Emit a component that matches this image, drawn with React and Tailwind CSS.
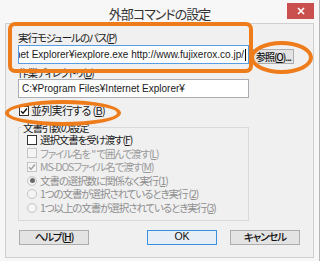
import React from 'react';

const jp = "font-['Noto_Sans_CJK_JP',sans-serif] [font-feature-settings:'palt']";
const latin = "font-['Liberation_Sans','Noto_Sans_CJK_JP',sans-serif] tracking-normal";

const Key = ({ k }) => (
  <>
    (<span className="underline underline-offset-1">{k}</span>)
  </>
);

const CheckBox = ({ checked, disabled, label }) => (
  <div className={`flex items-center h-[13.6px] gap-[3px] ${disabled ? 'text-[#9a9a9a]' : 'text-[#1a1a1a]'}`}>
    <div
      className={`w-[10px] h-[10px] border flex items-center justify-center ${
        disabled ? 'border-[#c4c4c4] bg-[#f4f4f4]' : 'border-[#333] bg-white'
      }`}
    >
      {checked && (
        <svg width="8" height="8" viewBox="0 0 8 8">
          <path d="M1 4.2 L3 6.2 L7 1.5" fill="none" stroke={disabled ? '#a0a0a0' : '#111'} strokeWidth="1.4" />
        </svg>
      )}
    </div>
    <span>{label}</span>
  </div>
);

const Radio = ({ checked, label }) => (
  <div className="flex items-center h-[13.6px] gap-[3px] text-[#8e8e8e]">
    <div className="w-[10px] h-[10px] rounded-full border border-[#c4c4c4] bg-[#f4f4f4] flex items-center justify-center">
      {checked && <div className="w-[5px] h-[5px] rounded-full bg-[#6a6a6a]" />}
    </div>
    <span>{label}</span>
  </div>
);

const Btn = ({ children, primary, className = '' }) => (
  <div
    className={`h-[15px] flex items-center justify-center text-[10.5px] font-medium text-[#111] ${
      primary ? 'border border-[#3c8fdc] bg-[#e8eef5]' : 'border border-[#adadad] bg-[#e3e3e3]'
    } ${className}`}
  >
    {children}
  </div>
);

export default function App() {
  return (
    <div className={`relative w-[322px] h-[261px] bg-white overflow-hidden ${jp}`}>
      <div className="w-[320px] h-[261px] bg-[#f7f7f7] border-r border-[#b5b5b5] flex flex-col">
        {/* title bar */}
        <div className="relative h-[23px] flex items-center justify-center">
          <span className="text-[13px] tracking-[-1px] text-[#333] mt-[4px]">外部コマンドの設定</span>
          <div className="absolute right-[5px] top-[3px] w-[27px] h-[16px] bg-[#c9504f] flex items-center justify-center">
            <svg width="8" height="8" viewBox="0 0 8 8">
              <path d="M1 1 L7 7 M7 1 L1 7" stroke="white" strokeWidth="1.6" />
            </svg>
          </div>
        </div>

        {/* client */}
        <div className="ml-[5px] w-[309px] h-[235px] border border-[#cfcfcf] bg-[#f0f0f0] pl-[12px] flex flex-col text-[10.5px] tracking-[-1.1px] text-[#1a1a1a]">
          <div className="mt-[7px] h-[13px] leading-[13px]">
            実行モジュールのパス<Key k="P" />
          </div>
          <div className="mt-[1px] flex">
            <div className={`w-[231px] h-[19px] border border-[#569de5] bg-white flex items-center justify-end overflow-hidden whitespace-nowrap pr-[2px] text-[10px] ${latin}`}>
              <span>C:¥Program Files¥Internet Explorer¥iexplore.exe http://www.fujixerox.co.jp/</span>
              <span className="ml-[1px] w-px h-[12px] bg-black shrink-0" />
            </div>
            <Btn className="ml-[4px] mt-[4px] w-[41px] whitespace-nowrap overflow-hidden text-[10px]">
              参照<Key k="O" />...
            </Btn>
          </div>
          <div className="mt-[2px] h-[13px] leading-[13px]">
            作業ディレクトリ<Key k="D" />
          </div>
          <div className={`w-[231px] h-[19px] border border-[#abadb3] bg-white flex items-center pl-[3px] whitespace-nowrap text-[10px] ${latin}`}>
            C:¥Program Files¥Internet Explorer¥
          </div>
          <div className="mt-[5px] h-[15px] flex items-center gap-[2px] pl-[1px]">
            <div className="w-[10px] h-[10px] border border-[#333] bg-white flex items-center justify-center">
              <svg width="8" height="8" viewBox="0 0 8 8">
                <path d="M1 4.2 L3 6.2 L7 1.5" fill="none" stroke="#111" strokeWidth="1.4" />
              </svg>
            </div>
            <span className="text-[11px] tracking-[-0.7px]">
              並列実行する <Key k="B" />
            </span>
          </div>

          {/* group */}
          <div className="relative mt-[9px] w-[231px] border border-[#dadada] pt-[5px] pb-[5px] pl-[8px]">
            <span className="absolute left-[3px] top-[-6px] px-[1px] bg-[#f0f0f0] leading-[11px]">文書引数の設定</span>
            <CheckBox label={<>選択文書を受け渡す<Key k="F" /></>} />
            <CheckBox disabled label={<>ファイル名を " で囲んで渡す<Key k="L" /></>} />
            <CheckBox disabled checked label={<>MS-DOSファイル名で渡す<Key k="M" /></>} />
            <Radio checked label={<>文書の選択数に関係なく実行<Key k="1" /></>} />
            <Radio label={<>1つの文書が選択されているとき実行 <Key k="2" /></>} />
            <Radio label={<>1つ以上の文書が選択されているとき実行<Key k="3" /></>} />
          </div>

          <div className="mt-[9px] flex">
            <Btn className="ml-[1px] w-[70px]">
              ヘルプ<Key k="H" />
            </Btn>
            <Btn primary className={`ml-[58px] w-[70px] ${latin}`}>
              OK
            </Btn>
            <Btn className="ml-[13px] w-[70px]">キャンセル</Btn>
          </div>
        </div>
      </div>

      {/* orange highlights */}
      <div className="absolute left-[8px] top-[22px] w-[245px] h-[51px] border-[4px] border-[#ee7c1a] rounded-[7px]" />
      <div className="absolute left-[250px] top-[41px] w-[63px] h-[33px] border-[4px] border-[#ee7c1a] rounded-[50%]" />
      <div className="absolute left-[5px] top-[100px] w-[116px] h-[26px] border-[4px] border-[#ee7c1a] rounded-[50%]" />
    </div>
  );
}
